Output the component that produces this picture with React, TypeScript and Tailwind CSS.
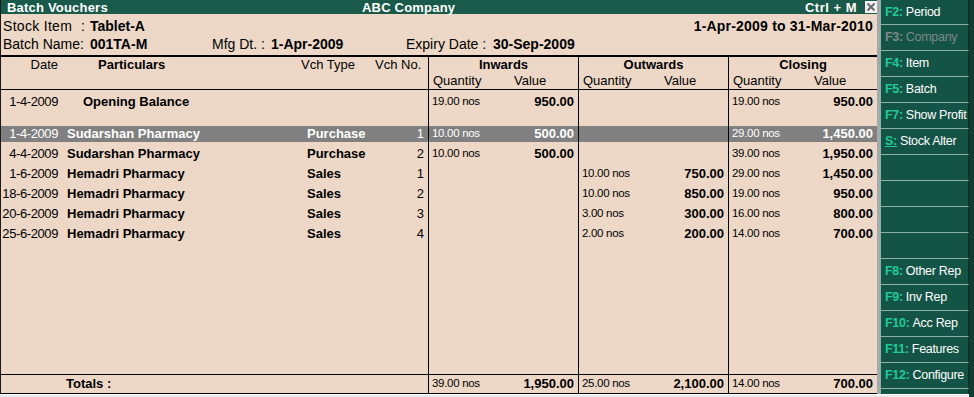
import React from "react";

type R = {
  date: string;
  part: string;
  type: string;
  no: string;
  inQ?: string;
  inV?: string;
  outQ?: string;
  outV?: string;
  clQ?: string;
  clV?: string;
  hl?: boolean;
};

const rows: R[] = [
  { date: "1-4-2009", part: "Sudarshan Pharmacy", type: "Purchase", no: "1", inQ: "10.00 nos", inV: "500.00", clQ: "29.00 nos", clV: "1,450.00", hl: true },
  { date: "4-4-2009", part: "Sudarshan Pharmacy", type: "Purchase", no: "2", inQ: "10.00 nos", inV: "500.00", clQ: "39.00 nos", clV: "1,950.00" },
  { date: "1-6-2009", part: "Hemadri Pharmacy", type: "Sales", no: "1", outQ: "10.00 nos", outV: "750.00", clQ: "29.00 nos", clV: "1,450.00" },
  { date: "18-6-2009", part: "Hemadri Pharmacy", type: "Sales", no: "2", outQ: "10.00 nos", outV: "850.00", clQ: "19.00 nos", clV: "950.00" },
  { date: "20-6-2009", part: "Hemadri Pharmacy", type: "Sales", no: "3", outQ: "3.00 nos", outV: "300.00", clQ: "16.00 nos", clV: "800.00" },
  { date: "25-6-2009", part: "Hemadri Pharmacy", type: "Sales", no: "4", outQ: "2.00 nos", outV: "200.00", clQ: "14.00 nos", clV: "700.00" },
];

const qCls = "text-[11.5px] tracking-[-0.3px]";

function QV({ q, v, hl }: { q?: string; v?: string; hl?: boolean }) {
  return (
    <div className={`h-[16px] my-[2px] flex items-center justify-between pl-[3px] pr-[4px] ${hl ? "bg-[#808080] text-white" : ""}`}>
      <span className={qCls}>{q ?? ""}</span>
      <span className="text-[13px] font-bold">{v ?? ""}</span>
    </div>
  );
}

function Row({ r }: { r: R }) {
  const hl = r.hl;
  return (
    <div className="flex h-[20px]">
      <div className="w-[427px]">
        <div className={`h-[16px] my-[2px] flex items-center ${hl ? "bg-[#808080] text-white" : ""}`}>
          <span className="w-[57px] text-right text-[13px] tracking-[-0.4px]">{r.date}</span>
          <span className="w-[249px] pl-[9px] text-[13px] font-bold">{r.part}</span>
          <span className="w-[80px] text-[13px] font-bold">{r.type}</span>
          <span className="w-[37px] text-right text-[13px]">{r.no}</span>
        </div>
      </div>
      <div className="w-[150px] border-l border-black">
        <QV q={r.inQ} v={r.inV} hl={hl} />
      </div>
      <div className="w-[150px] border-l border-black">
        <QV q={r.outQ} v={r.outV} hl={hl} />
      </div>
      <div className="flex-1 border-l border-black">
        <QV q={r.clQ} v={r.clV} hl={hl} />
      </div>
    </div>
  );
}

function Blank({ h }: { h: string }) {
  return (
    <div className={`flex ${h}`}>
      <div className="w-[427px]" />
      <div className="w-[150px] border-l border-black" />
      <div className="w-[150px] border-l border-black" />
      <div className="flex-1 border-l border-black" />
    </div>
  );
}

type B = { k?: string; l?: string; dis?: boolean; u?: boolean; h: string };

const buttons: B[] = [
  { k: "F2:", l: "Period", h: "h-[24px]" },
  { k: "F3:", l: "Company", dis: true, h: "h-[26px]" },
  { k: "F4:", l: "Item", h: "h-[26px]" },
  { k: "F5:", l: "Batch", h: "h-[26px]" },
  { k: "F7:", l: "Show Profit", h: "h-[26px]" },
  { k: "S:", l: "Stock Alter", u: true, h: "h-[26px]" },
  { h: "h-[26px]" },
  { h: "h-[26px]" },
  { h: "h-[26px]" },
  { h: "h-[26px]" },
  { k: "F8:", l: "Other Rep", h: "h-[26px]" },
  { k: "F9:", l: "Inv Rep", h: "h-[26px]" },
  { k: "F10:", l: "Acc Rep", h: "h-[26px]" },
  { k: "F11:", l: "Features", h: "h-[26px]" },
  { k: "F12:", l: "Configure", h: "h-[26px]" },
  { h: "h-[26px]" },
];

export default function App() {
  return (
    <div className="w-[974px] h-[397px] overflow-hidden flex flex-col bg-[#0f3b31] font-['Liberation_Sans',Arial,sans-serif] text-black">
      <div className="flex h-[394px]">
        <div className="w-[877px] flex flex-col border-l border-[#1a1a1a] bg-[#edd8c7]">
          {/* title bar */}
          <div className="h-[14px] flex items-center bg-[#1a5a4a] text-white font-bold text-[13px] leading-none">
            <span className="w-[361px] pl-[6px] tracking-[0.2px]">Batch Vouchers</span>
            <span className="tracking-[0.2px]">ABC Company</span>
            <span className="ml-auto mr-[8px] tracking-[0.5px]">Ctrl + M</span>
            <span className="w-[12px] h-[12px] bg-[#f2f2f2] flex items-center justify-center">
              <svg width="10" height="10" viewBox="0 0 10 10">
                <path d="M1.5 1.5 L8.5 8.5 M8.5 1.5 L1.5 8.5" stroke="#6a6a6a" strokeWidth="2" />
              </svg>
            </span>
          </div>
          {/* info */}
          <div className="h-[41px] pt-[4px]">
            <div className="h-[16px] flex items-center pl-[2px]">
              <span className="w-[78px] text-[14px] tracking-[0.3px]">Stock Item</span>
              <span className="w-[9px] text-[14px]">:</span>
              <span className="text-[14px] font-bold">Tablet-A</span>
              <span className="ml-auto pr-[4px] text-[14px] font-bold tracking-[0.2px]">1-Apr-2009 to 31-Mar-2010</span>
            </div>
            <div className="h-[16px] mt-[2px] flex items-center pl-[2px]">
              <span className="w-[87px] text-[14px]">Batch Name:</span>
              <span className="w-[122px] text-[14px] font-bold">001TA-M</span>
              <span className="w-[59px] text-[14px]">Mfg Dt. :</span>
              <span className="w-[135px] text-[14px] font-bold">1-Apr-2009</span>
              <span className="w-[87px] text-[14px]">Expiry Date :</span>
              <span className="text-[14px] font-bold">30-Sep-2009</span>
            </div>
          </div>
          <div className="h-[2px] bg-black" />
          {/* table header */}
          <div className="flex h-[33px] border-b border-black">
            <div className="w-[427px]">
              <div className="h-[16px] flex items-center">
                <span className="w-[57px] text-right text-[13px]">Date</span>
                <span className="w-[243px] pl-[40px] text-[13px] font-bold">Particulars</span>
                <span className="w-[74px] text-[13px]">Vch Type</span>
                <span className="text-[13px]">Vch No.</span>
              </div>
            </div>
            {["Inwards", "Outwards", "Closing"].map((t, i) => (
              <div key={t} className={`${i < 2 ? "w-[150px]" : "flex-1"} border-l border-black`}>
                <div className="h-[16px] flex items-center justify-center text-[13px] font-bold">{t}</div>
                <div className="h-[16px] flex items-center text-[13px]">
                  <span className="w-[85px] pl-[4px]">Quantity</span>
                  <span>Value</span>
                </div>
              </div>
            ))}
          </div>
          {/* body */}
          <div className="flex-1 flex flex-col">
            <Blank h="h-[2px]" />
            <div className="flex h-[20px]">
              <div className="w-[427px]">
                <div className="h-[16px] my-[2px] flex items-center">
                  <span className="w-[57px] text-right text-[13px] tracking-[-0.4px]">1-4-2009</span>
                  <span className="pl-[25px] text-[13px] font-bold">Opening Balance</span>
                </div>
              </div>
              <div className="w-[150px] border-l border-black">
                <QV q="19.00 nos" v="950.00" />
              </div>
              <div className="w-[150px] border-l border-black" />
              <div className="flex-1 border-l border-black">
                <QV q="19.00 nos" v="950.00" />
              </div>
            </div>
            <Blank h="h-[12px]" />
            {rows.map((r, i) => (
              <Row key={i} r={r} />
            ))}
            <Blank h="flex-1" />
          </div>
          {/* totals */}
          <div className="flex h-[20px] border-t border-b border-black">
            <div className="w-[427px] flex items-center">
              <span className="pl-[65px] text-[13px] font-bold">Totals :</span>
            </div>
            <div className="w-[150px] border-l border-black flex items-center justify-between pl-[3px] pr-[4px]">
              <span className={qCls}>39.00 nos</span>
              <span className="text-[13px] font-bold">1,950.00</span>
            </div>
            <div className="w-[150px] border-l border-black flex items-center justify-between pl-[3px] pr-[4px]">
              <span className={qCls}>25.00 nos</span>
              <span className="text-[13px] font-bold">2,100.00</span>
            </div>
            <div className="flex-1 border-l border-black flex items-center justify-between pl-[3px] pr-[4px]">
              <span className={qCls}>14.00 nos</span>
              <span className="text-[13px] font-bold">700.00</span>
            </div>
          </div>
        </div>
        <div className="w-[3px] bg-[#a8a8a8]" />
        {/* sidebar */}
        <div className="w-[94px] flex flex-col overflow-hidden">
          {buttons.map((b, i) => (
            <div
              key={i}
              className={`${b.h} shrink-0 w-[89px] flex items-center pl-[4px] overflow-hidden whitespace-nowrap bg-[#145446] border-l border-[#8fb1a2] ${i > 0 ? "border-t" : ""} border-r-[1px] border-r-[#0b2e26] text-[12.5px] tracking-[-0.3px]`}
            >
              {b.k && (
                <>
                  <span className={`font-bold ${b.dis ? "text-[#7d8a85]" : "text-[#22c997]"} ${b.u ? "underline" : ""}`}>{b.k}</span>
                  <span className={`ml-[3px] ${b.dis ? "text-[#7d8a85]" : "text-white"}`}>{b.l}</span>
                </>
              )}
            </div>
          ))}
        </div>
      </div>
      <div className="h-[3px] flex">
        <div className="w-[969px] border-t border-r border-white bg-[#e9e9e9]" />
      </div>
    </div>
  );
}
